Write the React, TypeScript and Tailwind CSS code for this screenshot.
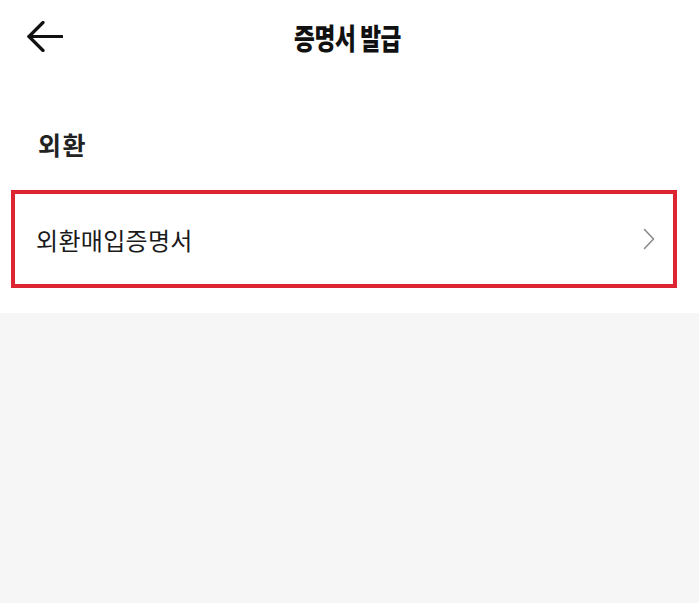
import React from "react";

export default function App() {
  return (
    <div
      className="min-h-screen w-full bg-[#f6f6f6] flex flex-col"
      style={{ fontFamily: '"Noto Sans CJK KR", "Noto Sans", sans-serif' }}
    >
      <div className="bg-white flex flex-col">
        <div className="relative h-[74px] flex items-center justify-center">
          <div className="absolute left-[27px] top-[21px]">
            <svg width="36" height="31" viewBox="0 0 36 31" fill="none">
              <path d="M2 15.5H35" stroke="#111" strokeWidth="3.2" strokeLinecap="round" />
              <path d="M16 1.5L2 15.5L16 29.5" stroke="#111" strokeWidth="3.2" strokeLinecap="round" strokeLinejoin="round" />
            </svg>
          </div>
          <div className="text-[29px] leading-[34px] font-black text-[#111] scale-x-[0.78] tracking-[-0.5px] -mt-[1px] ml-[-3px]">
            증명서 발급
          </div>
        </div>
        <div className="pl-[38px] pt-[55px] pb-[30px] text-[25px] leading-[31px] font-bold text-[#222] tracking-[1.5px]">
          외환
        </div>
        <div className="ml-[11px] mr-[22px] h-[98px] border-4 border-[#dc2531] flex items-center justify-between pl-[21px] pr-[18px]">
          <span className="text-[24px] leading-[30px] text-[#1a1a1a] mt-[2px] tracking-[0.3px]">외환매입증명서</span>
          <svg width="12" height="22" viewBox="0 0 12 22" fill="none">
            <path d="M1.5 1.5L10.5 11L1.5 20.5" stroke="#8a8a8a" strokeWidth="1.6" strokeLinecap="round" strokeLinejoin="round" />
          </svg>
        </div>
        <div className="h-[25px]" />
      </div>
      <div className="flex-1" />
    </div>
  );
}
